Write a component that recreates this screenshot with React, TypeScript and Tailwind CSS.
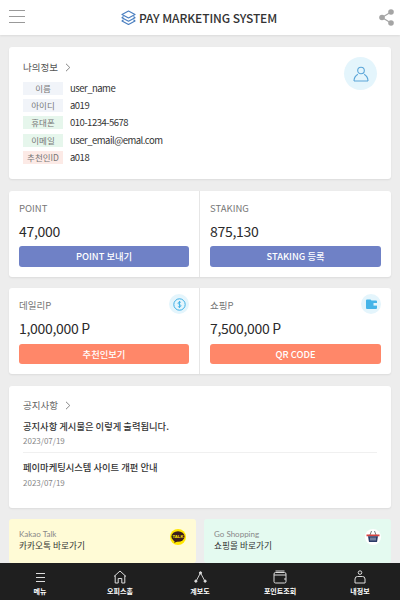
import React from "react";

function Chevron() {
  return (
    <svg width="6" height="9" viewBox="0 0 6 9" fill="none" stroke="#777" strokeWidth="0.9">
      <path d="M1 .8l3.8 3.7L1 8.2" />
    </svg>
  );
}

function Stack() {
  return (
    <svg width="15" height="16" viewBox="0 0 15 16" fill="none" stroke="#4a7fc0" strokeWidth="1.2" strokeLinejoin="round">
      <path d="M7.5 1L14 4.5 7.5 8 1 4.5z" />
      <path d="M2.5 6.6L1 7.7l6.5 3.5L14 7.7l-1.5-1.1" />
      <path d="M2.5 9.8L1 10.9l6.5 3.6 6.5-3.6-1.5-1.1" />
    </svg>
  );
}

const info: [string, string, string][] = [
  ["이름", "user_name", "bg-[#f1f4f9]"],
  ["아이디", "a019", "bg-[#f1f4f9]"],
  ["휴대폰", "010-1234-5678", "bg-[#e6f6ec]"],
  ["이메일", "user_email@emal.com", "bg-[#e6f6ec]"],
  ["추천인ID", "a018", "bg-[#fceae6]"],
];

function Cell({ label, value, btn, color, icon, border }: { label: string; value: string; btn: string; color: string; icon?: React.ReactNode; border?: boolean }) {
  return (
    <div className={`w-1/2 px-[10px] pt-[5px] ${border ? "border-r border-[#e6e6e6]" : ""}`}>
      <div className="h-[24px] flex items-center justify-between">
        <span className="text-[9.5px] leading-[24px] text-[#777]">{label}</span>
        {icon}
      </div>
      <div className="h-[22px] text-[14px] leading-[22px] tracking-[-0.3px] text-[#2b2b2b]">{value}</div>
      <div className={`mt-[4.5px] h-[20.5px] rounded-[3px] ${color} text-white text-[9.3px] leading-[20.5px] font-medium text-center`}>{btn}</div>
    </div>
  );
}

function IconBubble({ children }: { children: React.ReactNode }) {
  return <div className="w-[20px] h-[20px] -mt-[2px] rounded-full bg-[#e4f5fc] flex items-center justify-center">{children}</div>;
}

function NavItem({ label, children }: { label: string; children: React.ReactNode }) {
  return (
    <div className="flex-1 flex flex-col items-center">
      <div className="h-[14px] flex items-center justify-center">{children}</div>
      <div className="mt-[1px] text-[7px] leading-[12px] font-bold text-white">{label}</div>
    </div>
  );
}

export default function App() {
  return (
    <div className="relative w-[400px] h-[600px] overflow-hidden bg-[#ededed] font-['Noto_Sans_CJK_KR','Noto_Sans',sans-serif]">
      <header className="h-[35px] bg-white shadow-[0_1px_2px_rgba(0,0,0,0.08)] flex items-center justify-between pl-[9px] pr-[6px]">
        <div className="w-[16px] flex flex-col gap-[5px] mb-[3px]">
          <div className="h-px bg-[#999]" />
          <div className="h-px bg-[#999]" />
          <div className="h-px bg-[#999]" />
        </div>
        <div className="flex items-center gap-[3px] mr-[6px]">
          <Stack />
          <span className="text-[12px] font-medium text-[#333] tracking-[-0.1px]">PAY MARKETING SYSTEM</span>
        </div>
        <svg width="15" height="17" viewBox="0 0 15 17" fill="#a5a5a5" stroke="none">
          <circle cx="12" cy="3" r="2.8" />
          <circle cx="3" cy="8.5" r="2.8" />
          <circle cx="12" cy="14" r="2.8" />
          <path d="M3 8.5L12 3M3 8.5L12 14" stroke="#a5a5a5" strokeWidth="1.2" />
        </svg>
      </header>

      <main className="px-[9px] pt-[12px] flex flex-col gap-[11.5px]">
        <section className="h-[132px] bg-white rounded-[3px] shadow-[0_1px_2px_rgba(0,0,0,0.08)] px-[14px] pt-[10px] relative">
          <div className="flex items-center gap-[7px] h-[20px] text-[9.5px] text-[#555]">
            <span>나의정보</span>
            <Chevron />
          </div>
          <div className="mt-[5px] flex flex-col gap-[4.2px]">
            {info.map(([k, v, c]) => (
              <div key={k} className="flex items-center h-[13px]">
                <div className={`w-[40px] h-[13px] ${c} text-[8.5px] leading-[13px] text-[#777] text-center`}>{k}</div>
                <div className="ml-[7px] text-[9.5px] leading-[13px] tracking-[-0.5px] text-[#333]">{v}</div>
              </div>
            ))}
          </div>
          <div className="absolute right-[14px] top-[10px] w-[33px] h-[33px] rounded-full bg-[#e4f5fc] flex items-center justify-center">
            <svg width="16" height="16" viewBox="0 0 16 16" fill="none" stroke="#5aa5d8" strokeWidth="1.1">
              <circle cx="8" cy="4.5" r="3.3" />
              <path d="M1 15c0-4 2.5-6 3.8-6.8M15 15c0-4-2.5-6-3.8-6.8M1 15h14" />
            </svg>
          </div>
        </section>

        <section className="h-[86px] bg-white rounded-[3px] shadow-[0_1px_2px_rgba(0,0,0,0.08)] flex">
          <Cell label="POINT" value="47,000" btn="POINT 보내기" color="bg-[#6f81c6]" border />
          <Cell label="STAKING" value="875,130" btn="STAKING 등록" color="bg-[#6f81c6]" />
        </section>

        <section className="h-[86px] bg-white rounded-[3px] shadow-[0_1px_2px_rgba(0,0,0,0.08)] flex">
          <Cell
            label="데일리P"
            value="1,000,000 P"
            btn="추천인보기"
            color="bg-[#ff8769]"
            border
            icon={
              <IconBubble>
                <svg width="13" height="13" viewBox="0 0 13 13" fill="none" stroke="#3fb0e6" strokeWidth="1">
                  <circle cx="6.5" cy="6.5" r="5.7" />
                  <path d="M8 4.6c-.4-.6-2.9-.9-3 .6s3 1 3 2.6-2.7 1.2-3.1.5M6.5 3v7" strokeWidth="0.9" />
                </svg>
              </IconBubble>
            }
          />
          <Cell
            label="쇼핑P"
            value="7,500,000 P"
            btn="QR CODE"
            color="bg-[#ff8769]"
            icon={
              <IconBubble>
                <svg width="11" height="10" viewBox="0 0 11 10">
                  <path d="M0 1.5A1 1 0 011 .5h3.5l1 1H10a1 1 0 011 1V9a1 1 0 01-1 1H1a1 1 0 01-1-1z" fill="#46b4e8" />
                  <rect x="7.5" y="4" width="3.5" height="2.6" fill="#e4f5fc" />
                </svg>
              </IconBubble>
            }
          />
        </section>

        <section className="h-[122px] bg-white rounded-[3px] shadow-[0_1px_2px_rgba(0,0,0,0.08)] px-[14px] pt-[10px]">
          <div className="flex items-center gap-[7px] h-[20px] text-[9.5px] text-[#666]">
            <span>공지사항</span>
            <Chevron />
          </div>
          <div className="mt-[3px] text-[9.3px] leading-[14px] font-medium text-[#333]">공지사항 게시물은 이렇게 출력됩니다.</div>
          <div className="mt-[0.5px] text-[8px] leading-[16px] text-[#888]">2023/07/19</div>
          <div className="mt-[3px] h-px bg-[#f0f0f0]" />
          <div className="mt-[7px] text-[9.3px] leading-[14px] font-medium text-[#333]">페이마케팅시스템 사이트 개편 안내</div>
          <div className="mt-[1px] text-[8px] leading-[16px] text-[#888]">2023/07/19</div>
        </section>

        <section className="flex gap-[8px] h-[44px]">
          <div className="w-[187px] bg-[#fffbd6] rounded-[3px] px-[10px] pt-[9px] flex justify-between">
            <div>
              <div className="font-['Lato'] text-[8px] leading-[12px] text-[#888]">Kakao Talk</div>
              <div className="text-[8.7px] leading-[12px] text-[#333]">카카오톡 바로가기</div>
            </div>
            <svg width="16" height="16" viewBox="0 0 17 17" className="mt-[1px]">
              <circle cx="8.5" cy="8.5" r="8.5" fill="#ffe600" />
              <ellipse cx="8.5" cy="8" rx="7" ry="5.5" fill="#3c1e1e" />
              <path d="M5 12l-.5 3L8 13z" fill="#3c1e1e" />
              <text x="8.5" y="9.8" textAnchor="middle" fontSize="4.5" fontWeight="700" fill="#ffe600" fontFamily="Liberation Sans">TALK</text>
            </svg>
          </div>
          <div className="w-[187px] bg-[#e4faf0] rounded-[3px] px-[10px] pt-[9px] flex justify-between">
            <div>
              <div className="font-['Lato'] text-[8px] leading-[12px] text-[#888]">Go Shopping</div>
              <div className="text-[8.7px] leading-[12px] text-[#333]">쇼핑몰 바로가기</div>
            </div>
            <svg width="16" height="16" viewBox="0 0 16 16" className="mt-[1px]">
              <circle cx="8" cy="8" r="8" fill="#fff" />
              <path d="M5 6l1.5-4M11 6L9.5 2" stroke="#555" strokeWidth="0.8" />
              <rect x="1.5" y="5.5" width="13" height="1.8" fill="#d6423f" />
              <path d="M3 7.3h10l-1 5.7H4z" fill="#2b3a67" />
              <path d="M6 8.5v3M8 8.5v3M10 8.5v3" stroke="#fff" strokeWidth="0.7" />
            </svg>
          </div>
        </section>
      </main>

      <nav className="absolute left-0 right-0 bottom-0 h-[37px] bg-[#1f1f1f] flex pt-[7px]">
        <NavItem label="메뉴">
          <svg width="11" height="11" viewBox="0 0 11 11" stroke="#ddd" strokeWidth="1.2"><path d="M1 1.5h9M1 5.5h9M1 9.5h9" /></svg>
        </NavItem>
        <NavItem label="오피스홈">
          <svg width="14" height="14" viewBox="0 0 14 14" fill="none" stroke="#ddd" strokeWidth="1"><path d="M1 6.5L7 1l6 5.5M2.2 5.5V13h3V8.5h3.6V13h3V5.5" /></svg>
        </NavItem>
        <NavItem label="계보도">
          <svg width="13" height="12" viewBox="0 0 14 13" fill="none" stroke="#ddd" strokeWidth="1"><path d="M7 2L2.5 10.5M7 2l4.5 8.5" /><circle cx="7" cy="2" r="1.2" fill="#ddd" /><circle cx="2" cy="11" r="1.2" fill="#ddd" /><circle cx="12" cy="11" r="1.2" fill="#ddd" /></svg>
        </NavItem>
        <NavItem label="포인트조회">
          <svg width="14" height="14" viewBox="0 0 14 14" fill="none" stroke="#ddd" strokeWidth="1"><rect x="1" y="2.5" width="12" height="10.5" rx="1.5" /><path d="M2.5 1h9M1 5h12" /><path d="M11 9h2" /></svg>
        </NavItem>
        <NavItem label="내정보">
          <svg width="12" height="14" viewBox="0 0 12 14" fill="none" stroke="#ddd" strokeWidth="1"><circle cx="6" cy="2.6" r="1.8" /><path d="M1 13V9a2.5 2.5 0 012.5-2.5h5A2.5 2.5 0 0111 9v4z" /></svg>
        </NavItem>
      </nav>
    </div>
  );
}
